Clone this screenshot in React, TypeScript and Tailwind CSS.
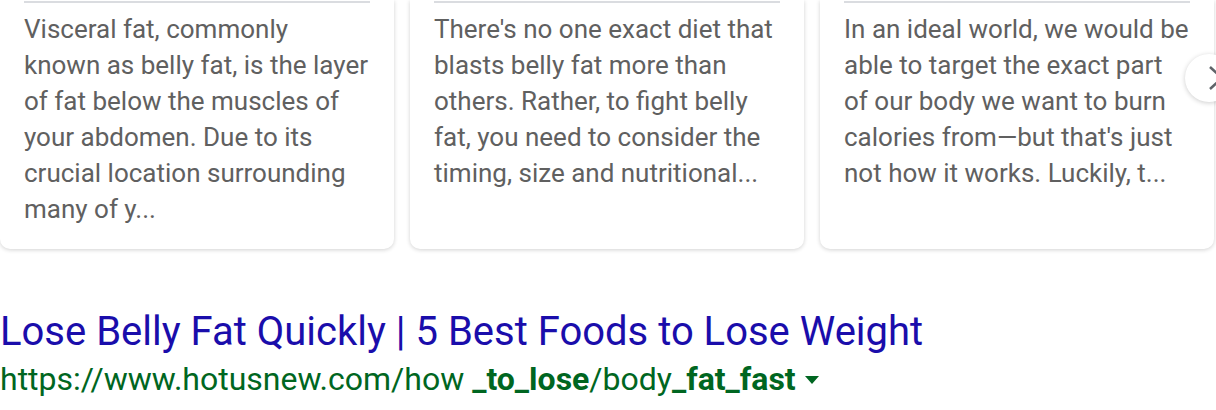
const cards = [
  "Visceral fat, commonly known as belly fat, is the layer of fat below the muscles of your abdomen. Due to its crucial location surrounding many of y...",
  "There's no one exact diet that blasts belly fat more than others. Rather, to fight belly fat, you need to consider the timing, size and nutritional...",
  "In an ideal world, we would be able to target the exact part of our body we want to burn calories from\u2014but that's just not how it works. Luckily, t...",
];

function Card({ text }: { text: string }) {
  return (
    <div className="w-[394px] shrink-0 h-[249px] bg-white rounded-b-[10px] shadow-[0_1px_4px_rgba(0,0,0,0.18)] px-6">
      <div className="h-[2px] mt-[1px] bg-[#dadce0]" />
      <p className="mt-[8px] text-[26px] leading-[36px] text-[#606060]">{text}</p>
    </div>
  );
}

export default function App() {
  return (
    <div className="w-[1216px] h-[410px] bg-white overflow-hidden relative font-['Roboto',sans-serif]">
      <div className="flex gap-4">
        {cards.map((t, i) => (
          <Card key={i} text={t} />
        ))}
      </div>
      <button className="absolute left-[1185px] top-[54px] w-12 h-12 rounded-full bg-white shadow-[0_1px_5px_rgba(0,0,0,0.2)]">
        <svg width="48" height="48" viewBox="0 0 48 48" className="absolute inset-0">
          <path d="M25 13l12 11-12 11" fill="none" stroke="#5f6368" strokeWidth="2.5" />
        </svg>
      </button>
      <div className="mt-[59px]">
        <h3 className="text-[40px] leading-[48px] text-[#1a0dab]">
          Lose Belly Fat Quickly | 5 Best Foods to Lose Weight
        </h3>
        <div className="mt-[3px] flex items-center text-[32px] leading-[40px] text-[#006621]">
          <span>
            https://www.hotusnew.com/how <b>_to_lose</b>/body<b>_fat_fast</b>
          </span>
          <svg width="14" height="8" viewBox="0 0 14 8" className="ml-[9px] mt-[2px]">
            <path d="M0 0h14L7 8z" fill="#006621" />
          </svg>
        </div>
      </div>
    </div>
  );
}
